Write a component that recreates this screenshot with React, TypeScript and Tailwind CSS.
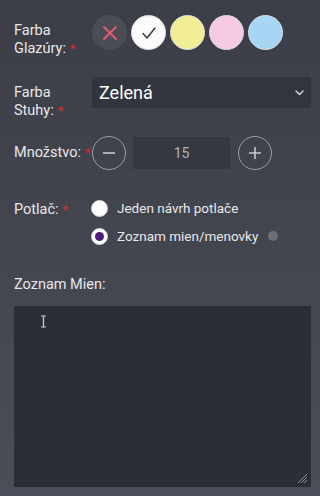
import { useState } from 'react';

const swatches = [
  { key: 'white', bg: 'bg-[#fbfbfb]' },
  { key: 'yellow', bg: 'bg-[#f2ee95]' },
  { key: 'pink', bg: 'bg-[#f6cbe2]' },
  { key: 'blue', bg: 'bg-[#a7d5f4]' },
];

function Req() {
  return <span className="ml-1 text-[13px] leading-none text-[#e3262c]">*</span>;
}

export default function App() {
  const [qty, setQty] = useState(15);
  const [print, setPrint] = useState<'one' | 'list'>('list');

  return (
    <div className="flex h-[496px] w-[320px] flex-col bg-gradient-to-b from-[#3b3e46] to-[#4a4e58] pl-[14px] pr-[9px] font-['Roboto',sans-serif] text-[14.5px] text-[#e8e8ea]">
      <div className="mt-[15px] flex">
        <div className="w-[78px] pt-[7px] leading-[18px]">
          Farba
          <br />
          Glazúry:<Req />
        </div>
        <div className="flex gap-[4px]">
          <button className="flex h-[35px] w-[35px] items-center justify-center rounded-full bg-[#4a4d56]">
            <svg width="16" height="16" viewBox="0 0 16 16" stroke="#e25a6b" strokeWidth="2" strokeLinecap="round">
              <path d="M2 2l12 12M14 2L2 14" />
            </svg>
          </button>
          {swatches.map((s, i) => (
            <button
              key={s.key}
              className={`flex h-[35px] w-[35px] items-center justify-center rounded-full border border-[#d9dadd] ${s.bg}`}
            >
              {i === 0 && (
                <svg width="16" height="14" viewBox="0 0 16 14" fill="none" stroke="#3d4048" strokeWidth="1.6" strokeLinecap="round" strokeLinejoin="round">
                  <path d="M2 7.5l4 4.5L14 2" />
                </svg>
              )}
            </button>
          ))}
        </div>
      </div>

      <div className="mt-[19px] flex">
        <div className="w-[78px] pt-[7px] leading-[18px]">
          Farba
          <br />
          Stuhy:<Req />
        </div>
        <div className="flex h-[31px] flex-1 items-center justify-between bg-[#32353e] pl-[7px] pr-[7px]">
          <span className="text-[18px] text-white">Zelená</span>
          <svg width="9" height="6" viewBox="0 0 9 6" fill="none" stroke="#d6d7da" strokeWidth="1.4" strokeLinecap="round">
            <path d="M1 1l3.5 3.5L8 1" />
          </svg>
        </div>
      </div>

      <div className="mt-[16px] flex items-center">
        <div className="w-[78px] whitespace-nowrap">
          Množstvo:<Req />
        </div>
        <button
          onClick={() => setQty((q) => Math.max(0, q - 1))}
          className="flex h-[34px] w-[34px] items-center justify-center rounded-full border border-[#9c9ea4]"
        >
          <svg width="12" height="2" viewBox="0 0 12 2" stroke="#c8c9cc" strokeWidth="1.6">
            <path d="M0 1h12" />
          </svg>
        </button>
        <div className="ml-[7px] flex h-[32px] w-[97px] items-center justify-center bg-[#353841] text-[14px] text-[#b2b4b9]">
          {qty}
        </div>
        <button
          onClick={() => setQty((q) => q + 1)}
          className="ml-[8px] flex h-[34px] w-[34px] items-center justify-center rounded-full border border-[#9c9ea4]"
        >
          <svg width="12" height="12" viewBox="0 0 12 12" stroke="#c8c9cc" strokeWidth="1.6">
            <path d="M0 6h12M6 0v12" />
          </svg>
        </button>
      </div>

      <div className="mt-[29px] flex leading-[18px]">
        <div className="w-[77px] pt-[2px]">
          Potlač:<Req />
        </div>
        <div className="flex flex-col gap-[10px] text-[13.5px]">
          <label className="flex h-[18px] items-center gap-[9px]" onClick={() => setPrint('one')}>
            <span className="flex h-[17px] w-[17px] items-center justify-center rounded-full border border-[#d4d5d8] bg-white">
              {print === 'one' && <span className="h-[9px] w-[9px] rounded-full bg-[#4b1e7c]" />}
            </span>
            <span>Jeden návrh potlače</span>
          </label>
          <label className="flex h-[18px] items-center gap-[9px]" onClick={() => setPrint('list')}>
            <span className="flex h-[17px] w-[17px] items-center justify-center rounded-full border border-[#d4d5d8] bg-white">
              {print === 'list' && <span className="h-[9px] w-[9px] rounded-full bg-[#4b1e7c]" />}
            </span>
            <span>Zoznam mien/menovky</span>
            <span className="ml-[1px] h-[10px] w-[10px] rounded-full bg-[#6c6f76]" />
          </label>
        </div>
      </div>

      <div className="mt-[31px] leading-[18px]">Zoznam Mien:</div>

      <div className="relative mt-[12px] h-[181px] w-[297px]">
        <textarea className="h-full w-full resize-none bg-[#2b2e36] p-2 text-white outline-none" />
        <svg className="pointer-events-none absolute bottom-[3px] right-[3px]" width="11" height="11" viewBox="0 0 11 11" stroke="#8d8f95" strokeWidth="1">
          <path d="M10 1L1 10M10 4L4 10M10 7L7 10" />
        </svg>
        <svg className="pointer-events-none absolute left-[26px] top-[9px]" width="7" height="13" viewBox="0 0 7 13" fill="none" stroke="#cfd0d3" strokeWidth="1.2">
          <path d="M1 1h5M1 12h5M3.5 1v11" />
        </svg>
      </div>
    </div>
  );
}
